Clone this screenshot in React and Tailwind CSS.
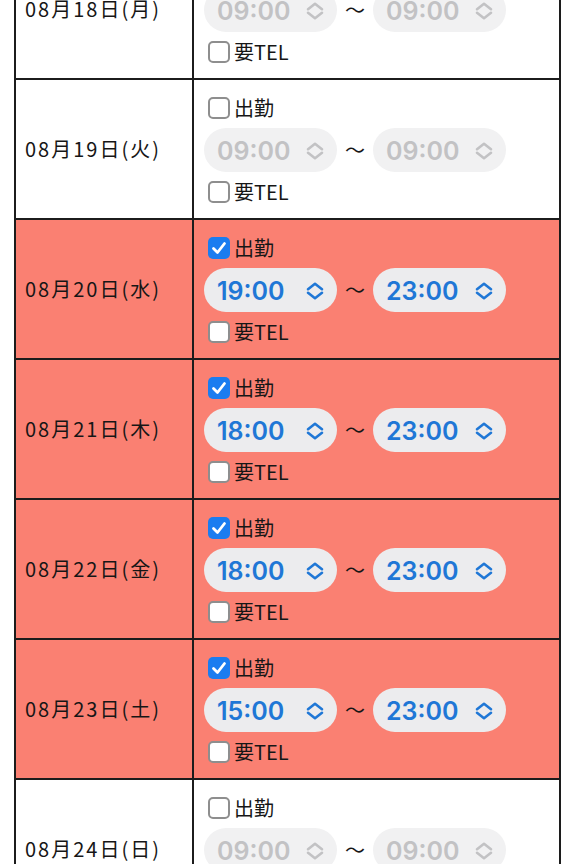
const days = [
  { date: "08月18日(月)", on: false, from: "09:00", to: "09:00" },
  { date: "08月19日(火)", on: false, from: "09:00", to: "09:00" },
  { date: "08月20日(水)", on: true, from: "19:00", to: "23:00" },
  { date: "08月21日(木)", on: true, from: "18:00", to: "23:00" },
  { date: "08月22日(金)", on: true, from: "18:00", to: "23:00" },
  { date: "08月23日(土)", on: true, from: "15:00", to: "23:00" },
  { date: "08月24日(日)", on: false, from: "09:00", to: "09:00" },
];

function Box({ checked }) {
  if (checked) {
    return (
      <span className="flex h-[22px] w-[22px] shrink-0 items-center justify-center rounded-[5px] bg-[#1a7cf0]">
        <svg width="18" height="18" viewBox="0 0 18 18" fill="none">
          <path d="M3.5 9.5 L7.5 13.5 L14.5 4.5" stroke="white" strokeWidth="2.8" strokeLinecap="round" strokeLinejoin="round" />
        </svg>
      </span>
    );
  }
  return <span className="h-[22px] w-[22px] shrink-0 rounded-[5px] border-2 border-[#8e8e8e] bg-white" />;
}

function Chevrons() {
  return (
    <svg width="18" height="18" viewBox="0 0 18 18" fill="none" className="mt-[2px] shrink-0">
      <path d="M2 7.2 L9 1.8 L16 7.2" stroke="currentColor" strokeWidth="2.6" strokeLinecap="round" strokeLinejoin="round" />
      <path d="M2 10.8 L9 16.2 L16 10.8" stroke="currentColor" strokeWidth="2.6" strokeLinecap="round" strokeLinejoin="round" />
    </svg>
  );
}

function TimePill({ value, on }) {
  return (
    <div
      className={
        on
          ? "flex h-[44px] w-[133px] items-center justify-between rounded-full bg-[#ececee] pl-[13px] pr-[13px] text-[#1f77d6]"
          : "flex h-[44px] w-[133px] items-center justify-between rounded-full bg-[#f1f1f2] pl-[13px] pr-[13px] text-[#c2c2c4]"
      }
    >
      <span className="pt-[3px] font-['Inter',sans-serif] text-[25px] font-semibold leading-none">{value}</span>
      <Chevrons />
    </div>
  );
}

function DayRow({ day }) {
  return (
    <div className={day.on ? "flex h-[140px] border-b-2 border-[#1c1c1c] bg-[#fa8072]" : "flex h-[140px] border-b-2 border-[#1c1c1c] bg-white"}>
      <div className="flex w-[178px] shrink-0 items-center border-r-2 border-[#1c1c1c] pl-[9px] text-[20px] tracking-[2px] text-[#161616]">
        {day.date}
      </div>
      <div className="flex flex-1 flex-col justify-center gap-[9px] pl-[10px] pt-[1px] text-[20px] text-[#161616]">
        <label className="flex items-center gap-[4px] pl-[4px] leading-[22px]">
          <Box checked={day.on} />
          <span>出勤</span>
        </label>
        <div className="flex items-center">
          <TimePill value={day.from} on={day.on} />
          <span className="w-[36px] text-center text-[20px]">〜</span>
          <TimePill value={day.to} on={day.on} />
        </div>
        <label className="flex items-center gap-[4px] pl-[4px] leading-[22px]">
          <Box checked={false} />
          <span>要TEL</span>
        </label>
      </div>
    </div>
  );
}

export default function App() {
  return (
    <div className="h-[864px] overflow-hidden bg-white font-['Noto_Sans_CJK_JP',sans-serif]">
      <div className="ml-[14px] mt-[-60px] w-[547px] border-x-2 border-[#1c1c1c]">
        {days.map((d) => (
          <DayRow key={d.date} day={d} />
        ))}
      </div>
    </div>
  );
}
